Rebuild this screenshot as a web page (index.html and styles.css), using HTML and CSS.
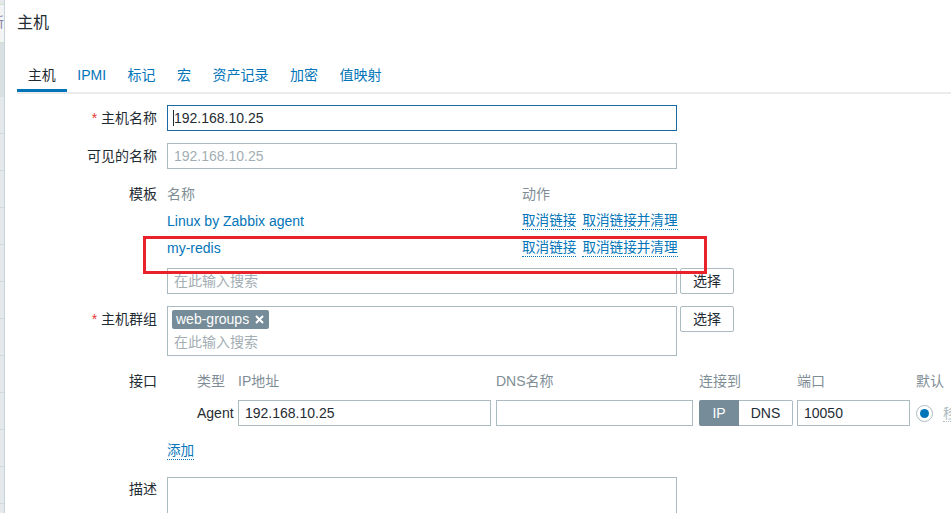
FILE: index.html
```html
<!DOCTYPE html>
<html lang="zh-CN">
<head>
<meta charset="utf-8">
<title>主机</title>
<link rel="stylesheet" href="styles.css">
</head>
<body>
<div class="page">
  <aside class="strip">
    <div class="strip-top"><span class="strip-frag">新</span></div>
    <div class="strip-dark"></div>
    <div class="strip-rest"></div>
  </aside>
  <main class="main">
    <h1 class="title">主机</h1>
    <nav class="tabs">
      <span class="tab active">主机</span>
      <span class="tab">IPMI</span>
      <span class="tab">标记</span>
      <span class="tab">宏</span>
      <span class="tab">资产记录</span>
      <span class="tab">加密</span>
      <span class="tab">值映射</span>
    </nav>
    <div class="form">
      <div class="row">
        <div class="lbl"><span class="req">*</span> 主机名称</div>
        <div class="fld"><div class="inp w510 focus"><span class="caret"></span>192.168.10.25</div></div>
      </div>
      <div class="row">
        <div class="lbl">可见的名称</div>
        <div class="fld"><div class="inp w510 ph">192.168.10.25</div></div>
      </div>
      <div class="row">
        <div class="lbl">模板</div>
        <div class="fld">
          <div class="tpl">
            <div class="tpl-row"><span class="tpl-name hd">名称</span><span class="tpl-act hd">动作</span></div>
            <div class="tpl-row"><span class="tpl-name link">Linux by Zabbix agent</span><span class="tpl-act"><span class="dlink">取消链接</span><span class="dlink">取消链接并清理</span></span></div>
            <div class="tpl-row"><span class="tpl-name link">my-redis</span><span class="tpl-act"><span class="dlink">取消链接</span><span class="dlink">取消链接并清理</span></span></div>
          </div>
          <div class="withbtn search"><div class="inp w510 ph">在此输入搜索</div><button class="btn">选择</button></div>
        </div>
      </div>
      <div class="row">
        <div class="lbl"><span class="req">*</span> 主机群组</div>
        <div class="fld withbtn">
          <div class="ms w510">
            <div class="tagline"><span class="tag">web-groups<svg class="tag-x" width="9" height="9" viewBox="0 0 9 9"><path d="M1 1L8 8M8 1L1 8" stroke="#fff" stroke-width="2"/></svg></span></div>
            <div class="ms-ph">在此输入搜索</div>
          </div>
          <button class="btn">选择</button>
        </div>
      </div>
      <div class="row">
        <div class="lbl">接口</div>
        <div class="fld">
          <div class="iface">
            <span></span><span class="hd">类型</span><span class="hd">IP地址</span><span class="hd">DNS名称</span><span class="hd">连接到</span><span class="hd">端口</span><span class="hd">默认</span>
            <span></span><span class="agent">Agent</span>
            <div class="inp w253">192.168.10.25</div>
            <div class="inp w197"></div>
            <div class="toggle"><span class="tg-on">IP</span><span class="tg-off">DNS</span></div>
            <div class="inp w113">10050</div>
            <div class="dflt"><span class="radio"><span class="dot"></span></span><span class="rm">移除</span></div>
          </div>
        </div>
      </div>
      <div class="row">
        <div class="lbl"></div>
        <div class="fld addfld"><span class="dlink">添加</span></div>
      </div>
      <div class="row">
        <div class="lbl">描述</div>
        <div class="fld"><div class="textarea w510"></div></div>
      </div>
    </div>
  </main>
  <div class="annot"></div>
</div>
</body>
</html>
```

FILE: styles.css
```css
* { box-sizing: border-box; }
html, body { margin: 0; padding: 0; background: #fff; }
body {
  width: 951px;
  height: 513px;
  overflow: hidden;
  font-family: "Liberation Sans", Arial, "Noto Sans CJK SC", sans-serif;
  font-size: 14px;
  color: #1f2c33;
}
.page { display: flex; height: 513px; position: relative; }

/* left strip (underlying sidebar edge) */
.strip {
  width: 5px;
  flex: none;
  border-right: 1px solid #c9d2d6;
  background: #e4e9eb;
  display: flex;
  flex-direction: column;
  overflow: hidden;
}
.strip-top {
  height: 39px;
  margin-top: 4px;
  border-top: 1px solid #cde3cb;
  border-bottom: 1px solid #cde3cb;
  background: #f2f4f5;
  overflow: hidden;
}
.strip-frag {
  display: block;
  margin-left: -10px;
  margin-top: 9px;
  font-size: 14px;
  line-height: 16px;
  color: #8a80a6;
}
.strip-dark { height: 54px; background: #d9e0e3; }
.strip-rest {
  flex: 1;
  background: repeating-linear-gradient(to bottom, transparent 0, transparent 36px, #d2d9dc 36px, #d2d9dc 37px);
}

.main { flex: 1; min-width: 0; padding-left: 12px; }

.title {
  margin: 0;
  padding-top: 13px;
  font-size: 16px;
  line-height: 20px;
  font-weight: normal;
  color: #1f2c33;
}

.tabs {
  display: flex;
  margin-top: 33px;
  border-bottom: 2px solid #ebebeb;
}
.tab {
  padding: 0 10.75px 5px;
  line-height: 18px;
  color: #0275b8;
  border-bottom: 3px solid transparent;
}
.tab.active { color: #1f2c33; border-bottom-color: #0275b8; }

.form { padding-top: 11px; }
.row { display: flex; margin-bottom: 12px; }
.lbl {
  width: 140px;
  flex: none;
  margin-right: 10px;
  text-align: right;
  line-height: 26px;
  white-space: nowrap;
}
.req { color: #e33734; }
.fld { flex: 1; min-width: 0; }

.inp {
  height: 26px;
  border: 1px solid #acbbc2;
  padding: 0 6px;
  line-height: 24px;
  background: #fff;
  white-space: nowrap;
  overflow: hidden;
  color: #1f2c33;
}
.inp.focus { border-color: #1b6aa5; }
.inp.ph { color: #a3aeb4; }
.caret {
  display: inline-block;
  width: 1px;
  height: 16px;
  background: #1f2c33;
  vertical-align: -3px;
  margin-left: -1px;
}
.w510 { width: 510px; }
.w253 { width: 253px; }
.w197 { width: 197px; }
.w113 { width: 113px; }

.hd { color: #7f8e96; }
.link { color: #0275b8; }

.tpl-row { display: flex; height: 27px; line-height: 27px; }
.tpl-name { width: 355px; flex: none; white-space: nowrap; }
.tpl-act { display: flex; gap: 6px; }
.dlink {
  color: #0275b8;
  border-bottom: 1px dotted #0275b8;
  font-size: 13.6px;
  line-height: 16px;
  align-self: center;
  white-space: nowrap;
}
.search { margin-top: 6px; }
.withbtn { display: flex; align-items: flex-start; gap: 3px; }
.btn {
  height: 26px;
  padding: 0 12px;
  border: 1px solid #acbbc2;
  border-radius: 2px;
  background: #fff;
  font-family: inherit;
  font-size: 14px;
  color: #1f2c33;
  line-height: 24px;
}

.ms {
  height: 50px;
  border: 1px solid #acbbc2;
  padding: 3px 4px 2px;
  background: #fff;
}
.tagline { height: 19px; margin-bottom: 2px; }
.tag {
  display: inline-flex;
  align-items: center;
  height: 19px;
  padding: 0 5px 0 4px;
  background: #768d99;
  color: #fff;
  border-radius: 2px;
  line-height: 19px;
}
.tag-x { margin-left: 6px; }
.ms-ph { line-height: 22px; padding-left: 2px; color: #a3aeb4; }

.iface {
  display: grid;
  grid-template-columns: 30px 41px 258px 203px 98px 119px max-content;
  grid-template-rows: 26px 26px;
  row-gap: 6px;
  width: max-content;
  line-height: 26px;
  white-space: nowrap;
}
.agent { color: #1f2c33; }
.toggle { display: flex; width: 94px; height: 26px; }
.tg-on {
  width: 40px;
  background: #768d99;
  color: #fff;
  text-align: center;
  border-radius: 2px 0 0 2px;
}
.tg-off {
  flex: 1;
  border: 1px solid #acbbc2;
  border-left: none;
  border-radius: 0 2px 2px 0;
  text-align: center;
  line-height: 24px;
  color: #1f2c33;
}
.dflt { display: flex; align-items: center; gap: 10px; height: 26px; }
.radio {
  width: 17px;
  height: 17px;
  border-radius: 50%;
  border: 1px solid #acbbc2;
  display: flex;
  align-items: center;
  justify-content: center;
  background: #fff;
}
.dot { width: 9px; height: 9px; border-radius: 50%; background: #0275b8; }
.rm {
  color: #acbbc2;
  border-bottom: 1px dotted #acbbc2;
  line-height: 16px;
}
.addfld { display: flex; align-items: center; height: 26px; }

.textarea {
  height: 70px;
  border: 1px solid #acbbc2;
  margin-top: 1px;
  background: #fff;
}

.annot {
  position: absolute;
  left: 143px;
  top: 236px;
  width: 564px;
  height: 38px;
  border: 3px solid #e8212a;
  pointer-events: none;
}
```
